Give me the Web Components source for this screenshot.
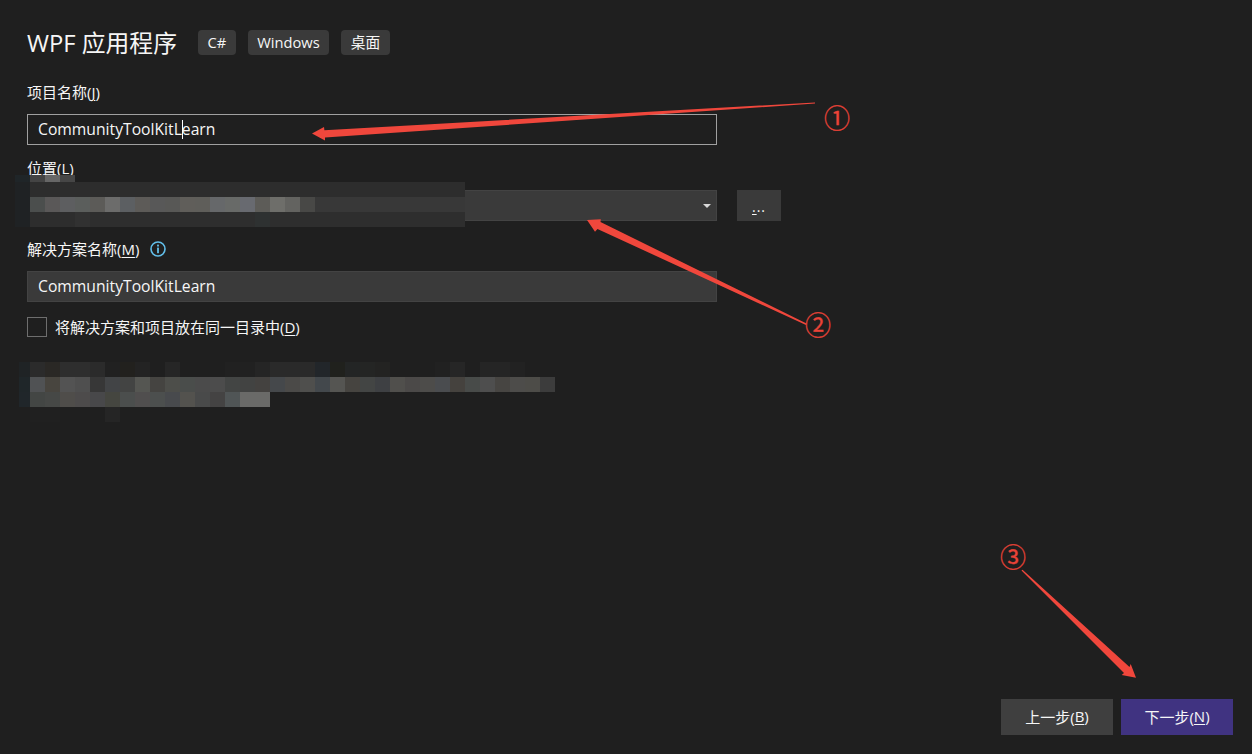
<!DOCTYPE html>
<html lang="zh-CN">
<head>
<meta charset="utf-8">
<title>WPF 应用程序</title>
<style>
  html, body { margin: 0; padding: 0; background: #1f1f1f; }
  body {
    width: 1252px;
    height: 754px;
    overflow: hidden;
    color: #f6f6f6;
    font-family: "Open Sans", "Noto Sans CJK SC", sans-serif;
    font-size: 15px;
  }
  u { text-underline-offset: 2px; }
  .first { --field-top: 28px; }
  .second { --field-top: 14px; }
  .third { --field-top: 19px; }
  .caret {
    display: inline-block;
    width: 0;
    height: 19px;
    margin-right: -1px;
    border-left: 1px solid #fff;
    vertical-align: -4px;
  }
</style>
</head>
<body>
<wizard-page>
  <span slot="title">WPF 应用程序</span>
  <wiz-tag slot="tags">C#</wiz-tag>
  <wiz-tag slot="tags">Windows</wiz-tag>
  <wiz-tag slot="tags">桌面</wiz-tag>

  <wiz-field class="first">
    <span slot="label">项目名称(<u>J</u>)</span>
    <wiz-input focused>CommunityToolKitL<span class="caret"></span>earn</wiz-input>
  </wiz-field>

  <wiz-field class="second">
    <span slot="label">位置(<u>L</u>)</span>
    <wiz-select></wiz-select>
    <wiz-button small><u>.</u>..</wiz-button>
  </wiz-field>

  <wiz-field class="third">
    <span slot="label">解决方案名称(<u>M</u>)</span>
    <info-icon slot="label"></info-icon>
    <wiz-input>CommunityToolKitLearn</wiz-input>
  </wiz-field>

  <wiz-check>将解决方案和项目放在同一目录中(<u>D</u>)</wiz-check>

  <wiz-button slot="footer">上一步(<u>B</u>)</wiz-button>
  <wiz-button slot="footer" primary>下一步(<u>N</u>)</wiz-button>
</wizard-page>

<pixel-mosaic style="left:15px;top:175px" rows='[
  [0,7,["#1f2528","#444444","#666666","#464646"]],
  [0,15,["#1f2224","#2d2d2d*29"]],
  [0,15,["#1f2224","#4b4e4d","#5a5858","#5d5e60","#5b5e5c","#5c5b58","#6c6c6b","#5c5f62","#5d5b58","#585858","#585856","#605e5a","#5f5e5a","#66686a","#686a68","#686a70","#5d5c58","#6e6e6a","#636360","#484846","#383838*10"]],
  [0,15,["#1f2224","#2d2d2d*3","#313131","#2e2e2e*11","#2e3131","#2e2e2e*13"]]
]'></pixel-mosaic>

<pixel-mosaic style="left:19px;top:362px" rows='[
  [0,15,["#1f2325:11","#2b2b2b","#2a2825","#2e2e2e","#2e2e2e","#2b2b2b","#212121","#22211e","#232323","#1f1f1f","#262626","#1f1f1f*3","#212121","#212121","#252525","#2a2a2a*3","#22262a","#20211d","#232525","#242524","#232322","#1f1f1f*3","#212121","#262626","#1f1f1f","#252525","#252525","#222222"]],
  [0,15,["#1f2629:11","#505254","#48453f","#535353","#4f4f4f","#373737","#424446","#434443","#555652","#454441","#4d4e4a","#4a4d4b","#4b4b4b","#4c4c4c","#434544","#424342","#444240","#45484b","#4b4a48","#4f4f4d","#43484c","#555552","#464440","#434544","#3e4043","#504f4c","#4b4948","#4d4c4a","#4a4c4f","#45423e","#484b49","#4e4e4e","#474542","#4d4c4a","#4d4c48","#3c3c3c"]],
  [0,15,["#20262a:11","#434644","#464846","#4f4d4a","#4d4b4b","#48484a","#454640","#4b4e4d","#504e4e","#4c4f4e","#484a4d","#53524e","#494a4a","#444343","#505556","#6a6a68","#6a6a68"]],
  [0,15,["#1f1f1f:11","#202020","#202020","#1f1f1f*3","#252525"]]
]'></pixel-mosaic>

<mark-up></mark-up>

<script>
const templateWizardPage = document.createElement("template");
templateWizardPage.innerHTML = `
  <style>
    :host {
      display: flex;
      flex-direction: column;
      box-sizing: border-box;
      height: 754px;
      padding: 30px 19px 19px 27px;
    }
    .head {
      display: flex;
      align-items: center;
      height: 25px;
    }
    .title {
      font-size: 23.8px;
      line-height: 25px;
      padding-top: 1px;
      margin-right: 21px;
    }
    .tags {
      display: flex;
      gap: 12px;
    }
    .foot {
      display: flex;
      justify-content: flex-end;
      gap: 8px;
      margin-top: auto;
    }
  </style>
  <div class="head">
    <div class="title"><slot name="title"></slot></div>
    <div class="tags"><slot name="tags"></slot></div>
  </div>
  <slot></slot>
  <div class="foot"><slot name="footer"></slot></div>
`;

class WizardPage extends HTMLElement {
  constructor() {
    super();
    this.attachShadow({ mode: "open" });
    this.shadowRoot.appendChild(templateWizardPage.content.cloneNode(true));
  }
}

const templateTag = document.createElement("template");
templateTag.innerHTML = `
  <style>
    :host {
      display: flex;
      align-items: center;
      box-sizing: border-box;
      height: 25px;
      padding: 0 9.5px 2px;
      background: #3a3a3a;
      border-radius: 4px;
      font-size: 14.7px;
    }
  </style>
  <slot></slot>
`;

class WizTag extends HTMLElement {
  constructor() {
    super();
    this.attachShadow({ mode: "open" });
    this.shadowRoot.appendChild(templateTag.content.cloneNode(true));
  }
}

const templateField = document.createElement("template");
templateField.innerHTML = `
  <style>
    :host {
      display: block;
      margin-top: var(--field-top, 14px);
    }
    .label {
      display: flex;
      align-items: center;
      gap: 11px;
      box-sizing: border-box;
      height: 20px;
      padding-bottom: 2px;
      line-height: 18px;
      margin-bottom: 11px;
      font-size: 15px;
    }
    .row {
      display: flex;
      gap: 20px;
    }
  </style>
  <div class="label"><slot name="label"></slot></div>
  <div class="row"><slot></slot></div>
`;

class WizField extends HTMLElement {
  constructor() {
    super();
    this.attachShadow({ mode: "open" });
    this.shadowRoot.appendChild(templateField.content.cloneNode(true));
  }
}

const templateInput = document.createElement("template");
templateInput.innerHTML = `
  <style>
    :host {
      display: flex;
      align-items: center;
      box-sizing: border-box;
      width: 690px;
      height: 31px;
      padding: 0 10px 2px;
      background: #3a3a3a;
      border: 1px solid #434343;
      font-size: 15.7px;
      white-space: nowrap;
    }
    :host([focused]) {
      background: #1f1f1f;
      border-color: #a0a0a0;
    }
  </style>
  <span><slot></slot></span>
`;

class WizInput extends HTMLElement {
  constructor() {
    super();
    this.attachShadow({ mode: "open" });
    this.shadowRoot.appendChild(templateInput.content.cloneNode(true));
  }
}

const templateSelect = document.createElement("template");
templateSelect.innerHTML = `
  <style>
    :host {
      display: flex;
      align-items: center;
      justify-content: flex-end;
      box-sizing: border-box;
      width: 690px;
      height: 31px;
      padding-right: 4px;
      background: #3a3a3a;
      border: 1px solid #434343;
    }
    .arrow {
      width: 0;
      height: 0;
      margin-right: 1px;
      border-left: 4px solid transparent;
      border-right: 4px solid transparent;
      border-top: 4px solid #d8d8d8;
    }
  </style>
  <span class="arrow"></span>
`;

class WizSelect extends HTMLElement {
  constructor() {
    super();
    this.attachShadow({ mode: "open" });
    this.shadowRoot.appendChild(templateSelect.content.cloneNode(true));
  }
}

const templateButton = document.createElement("template");
templateButton.innerHTML = `
  <style>
    :host {
      display: flex;
      align-items: center;
      justify-content: center;
      box-sizing: border-box;
      width: 112px;
      height: 36px;
      padding-bottom: 2px;
      background: #3f3f3f;
      font-size: 15px;
    }
    :host([primary]) {
      background: #403381;
    }
    :host([small]) {
      width: 44px;
      height: 31px;
      padding: 1px 0 0;
      background: #3a3a3a;
      font-size: 14px;
      letter-spacing: 1px;
    }
  </style>
  <slot></slot>
`;

class WizButton extends HTMLElement {
  constructor() {
    super();
    this.attachShadow({ mode: "open" });
    this.shadowRoot.appendChild(templateButton.content.cloneNode(true));
  }
}

const templateCheck = document.createElement("template");
templateCheck.innerHTML = `
  <style>
    :host {
      display: flex;
      align-items: center;
      gap: 8px;
      height: 20px;
      margin-top: 15px;
      font-size: 15px;
    }
    .box {
      box-sizing: border-box;
      width: 20px;
      height: 20px;
      border: 1px solid #6e6e6e;
    }
    .text {
      padding-bottom: 2px;
    }
  </style>
  <span class="box"></span>
  <span class="text"><slot></slot></span>
`;

class WizCheck extends HTMLElement {
  constructor() {
    super();
    this.attachShadow({ mode: "open" });
    this.shadowRoot.appendChild(templateCheck.content.cloneNode(true));
  }
}

class InfoIcon extends HTMLElement {
  constructor() {
    super();
    this.attachShadow({ mode: "open" });
    this.shadowRoot.innerHTML = `
      <style>
        :host { display: inline-flex; width: 16px; height: 16px; }
      </style>
      <svg width="16" height="16" viewBox="0 0 16 16" fill="none">
        <circle cx="8" cy="8" r="7" stroke="#62bfea" stroke-width="1.6"/>
        <rect x="7.1" y="3.6" width="1.8" height="1.9" fill="#62bfea"/>
        <rect x="7.1" y="6.6" width="1.8" height="5.6" fill="#62bfea"/>
      </svg>
    `;
  }
}

// the blurred-out paths, drawn over the page as blocks of colour
class PixelMosaic extends HTMLElement {
  constructor() {
    super();
    this.attachShadow({ mode: "open" });
    const rows = JSON.parse(this.getAttribute("rows"));
    let html = `
      <style>
        :host { position: absolute; display: block; }
        .row { display: flex; }
        .row span { display: block; width: 15px; flex: none; }
      </style>
    `;
    rows.forEach((row) => {
      html += `<div class="row" style="height:${row[1]}px">`;
      row[2].forEach((cell) => {
        const [color, count] = cell.split("*");
        const [fill, width] = color.split(":");
        for (let i = 0; i < (count || 1); i++) {
          html += `<span style="background:${fill};${width ? "width:" + width + "px" : ""}"></span>`;
        }
      });
      html += `</div>`;
    });
    this.shadowRoot.innerHTML = html;
  }
}

// red arrows and numbers someone painted on the screenshot
class MarkUp extends HTMLElement {
  constructor() {
    super();
    this.attachShadow({ mode: "open" });
    this.shadowRoot.innerHTML = `
      <style>
        :host { position: absolute; left: 0; top: 0; width: 1252px; height: 754px; display: block; pointer-events: none; }
        svg { position: absolute; left: 0; top: 0; }
        .num {
          position: absolute;
          width: 30px;
          height: 30px;
          line-height: 30px;
          text-align: center;
          font-family: "Noto Sans CJK SC", sans-serif;
          font-size: 26px;
          color: #ea4338;
          -webkit-text-stroke: 0.3px #ea4338;
        }
      </style>
      <svg width="1252" height="754" viewBox="0 0 1252 754">
        <g fill="#f0473c">
          <polygon points="815,102.4 815,103.6 325,137.4 325,140.6 312,133.6 324,127 324.4,130.2"/>
          <polygon points="806.5,323.5 806,325 597.5,229 595,231.8 587,220 600.8,219.3 600.5,222"/>
          <polygon points="1021.5,570.5 1022.5,569.8 1129.5,667 1130.7,664 1136,677.7 1121.7,675 1124,673"/>
        </g>
      </svg>
      <span class="num" style="left:822px;top:102px">①</span>
      <span class="num" style="left:803px;top:309px">②</span>
      <span class="num" style="left:998px;top:541px">③</span>
    `;
  }
}

window.customElements.define("wizard-page", WizardPage);
window.customElements.define("wiz-tag", WizTag);
window.customElements.define("wiz-field", WizField);
window.customElements.define("wiz-input", WizInput);
window.customElements.define("wiz-select", WizSelect);
window.customElements.define("wiz-button", WizButton);
window.customElements.define("wiz-check", WizCheck);
window.customElements.define("info-icon", InfoIcon);
window.customElements.define("pixel-mosaic", PixelMosaic);
window.customElements.define("mark-up", MarkUp);
</script>
</body>
</html>
